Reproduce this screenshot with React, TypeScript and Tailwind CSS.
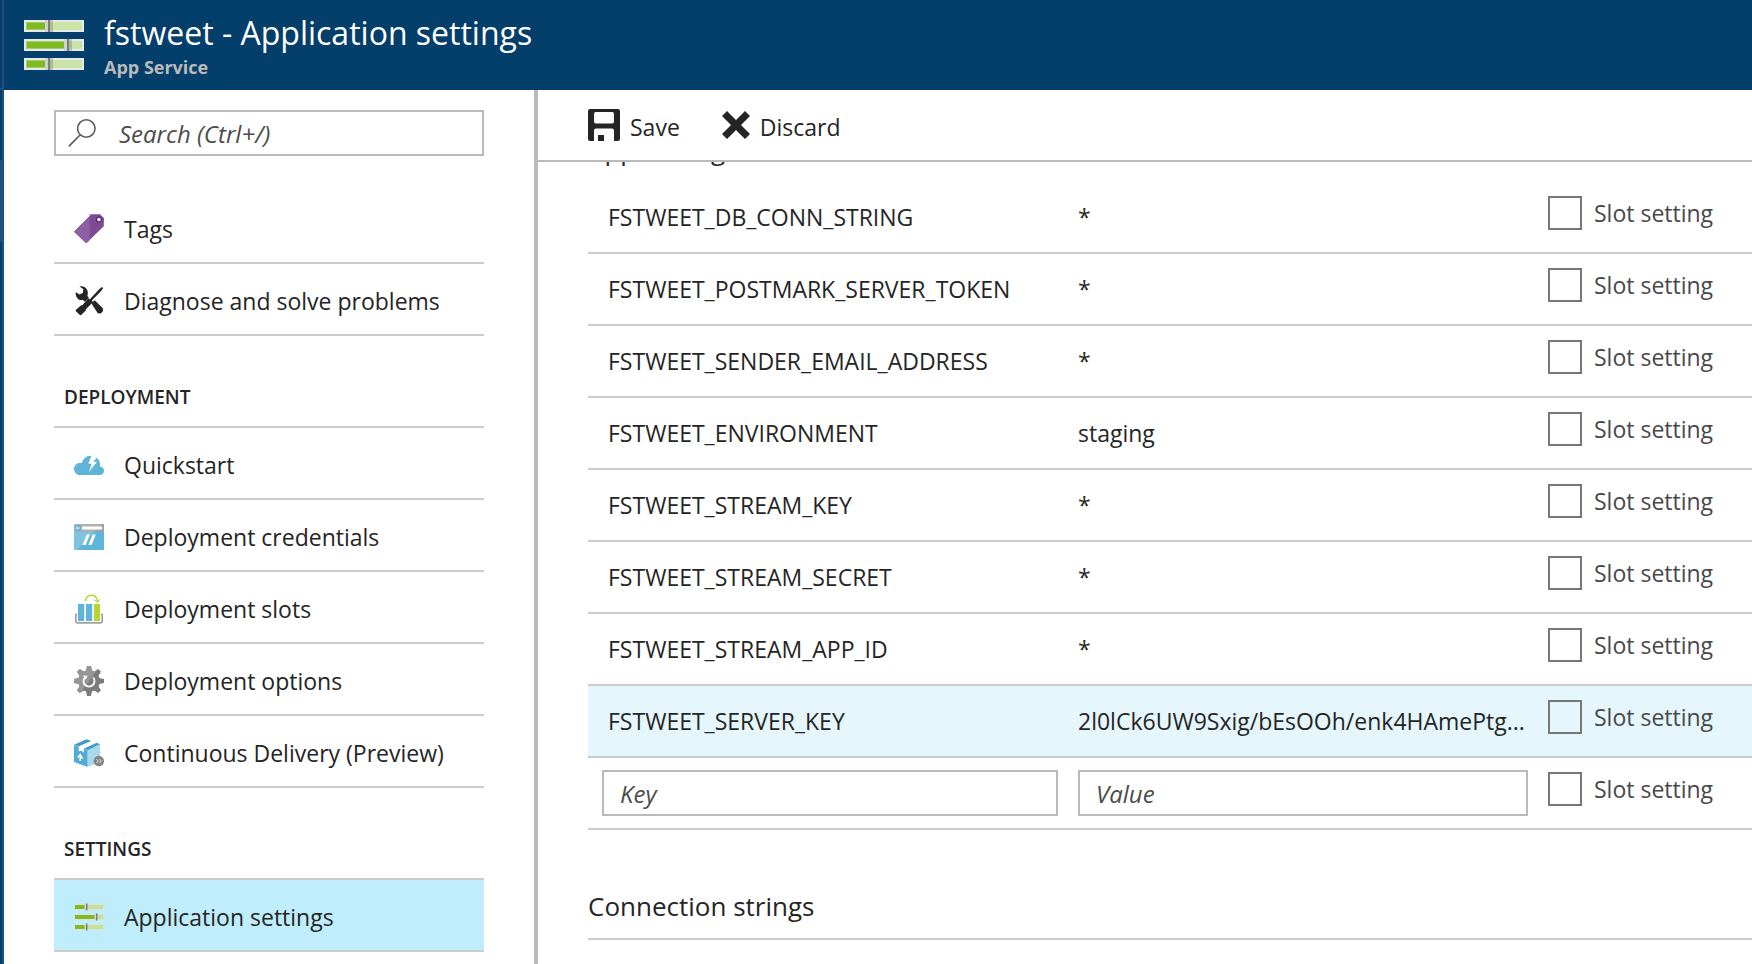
import React, { useId } from "react";

type IconProps = { className?: string };

function SlidersIcon({ className }: IconProps) {
  const bars = [
    { y: 1, knob: 22 },
    { y: 20, knob: 41 },
    { y: 39, knob: 22 },
  ];
  return (
    <svg viewBox="0 0 60 52" className={className} aria-hidden="true">
      {bars.map(({ y, knob }) => (
        <g key={y}>
          <rect x="0" y={y} width="60" height="12" fill="#e6e8ea" />
          <rect x="2" y={y + 2} width="56" height="8" fill="#cbe3a6" />
          <rect x="2" y={y + 2} width={knob - 2} height="8" fill="#a5cf63" />
          <rect x="3" y={y + 3} width={knob - 3} height="6" fill="#7fba22" />
          <rect x={knob - 1} y={y} width="3" height="12" fill="#cfd2d2" />
          <rect x={knob + 2} y={y} width="2" height="12" fill="#7a7a7a" />
          <rect x={knob + 4} y={y} width="3" height="12" fill="#000000" opacity="0.16" />
        </g>
      ))}
    </svg>
  );
}

function SmallSlidersIcon({ className }: IconProps) {
  const bars = [
    { y: 3, knob: 11 },
    { y: 13, knob: 21 },
    { y: 23, knob: 11 },
  ];
  return (
    <svg viewBox="0 0 30 30" className={className} aria-hidden="true">
      {bars.map(({ y, knob }) => (
        <g key={y}>
          <rect x="0.5" y={y - 1} width="29.5" height="6" fill="#d6e6d2" />
          <rect x="1" y={y} width="28" height="4" fill="#c6e09c" />
          <rect x="1" y={y} width={knob - 1} height="4" fill="#7fba22" />
          <rect x={knob - 0.5} y={y - 1.5} width="1.5" height="7" fill="#d0d4d6" />
          <rect x={knob + 1} y={y - 1.5} width="1.5" height="7" fill="#7a7f84" />
        </g>
      ))}
    </svg>
  );
}

function SearchIcon({ className }: IconProps) {
  return (
    <svg viewBox="0 0 28 28" className={className} aria-hidden="true" fill="none" stroke="#5a5a5a" strokeWidth="1.6">
      <circle cx="18.3" cy="9.5" r="8.7" />
      <path d="M12 16 0.8 27.4" />
    </svg>
  );
}

function TagIcon({ className }: IconProps) {
  return (
    <svg viewBox="0 0 30 30" className={className} aria-hidden="true">
      <path d="M17.5 0.3H26l4 4-0.3 8L12.3 29.3 0 17.8Z" fill="#7e4a96" />
      <path d="M17.5 0.3H15.5V26.2L12.3 29.3 0 17.8Z" fill="#8f5fa3" />
      <circle cx="25" cy="5.6" r="2.4" fill="#fff" stroke="#55266b" strokeWidth="1.2" />
    </svg>
  );
}

function ToolsIcon({ className }: IconProps) {
  return (
    <svg viewBox="0 0 30 30" className={className} aria-hidden="true" fill="#252525">
      <path d="M5.5 0.5C8.500-0.300 12 1 13.300 4.200c0.800 2 0.700 4 0 5.700l1.700 1.800-4.300 4.100-1.900-2c-2.400 0.600-4.800-0.300-6-2.400C1.600 9.600 1.400 7.700 1.900 6.200L5.600 8.400 9 6.800 9.200 3Z" />
      <path d="m17.3 17.2 3.4-2.900 7.400 7.300c1.300 1.400 1.300 3 0.200 4.400-1.600 1.800-3.400 2-4.700 1Z" />
      <path d="M28.6 1.3 29 2.6 26.2 6 17.8 14.4l1.200 1.700-7.300 7.300 0.300 0.800-5.100 5-1-0.300L2.1 25.400l-0.600-1.200 5.600-5 1 0.200 6-6.800 1.800 0.700L24.2 4.200 27.400 1.300Z" />
    </svg>
  );
}

function CloudIcon({ className }: IconProps) {
  return (
    <svg viewBox="0 0 30 30" className={className} aria-hidden="true">
      <path
        d="M5.8 25C2.5 25 0 22.300 0 19s2.500-6 6-6c0.700 0 1.300 0.100 1.800 0.300C9 9 12 5.800 16.500 5.800c4.600 0 8.600 3 9.500 7.600v3.100c2.500 0.200 4 2 4 4.200 0 2.500-1.700 4.300-4.200 4.300Z"
        fill="#5eb4d9"
      />
      <path d="M17.8 5 14.3 13.800h3.400L15 22l8-10.200h-3.800L23.500 7l1-2Z" fill="#fff" />
      <path d="M23.8 8.500 21.700 11.300h3.200Z" fill="#5eb4d9" />
    </svg>
  );
}

function CredentialsIcon({ className }: IconProps) {
  return (
    <svg viewBox="0 0 30 30" className={className} aria-hidden="true">
      <rect x="0" y="2" width="30" height="26" fill="#5eb4d9" />
      <rect x="0" y="2" width="30" height="7.5" fill="#a2a2a2" />
      <path d="M0 9.5H20.5L3 28H0Z" fill="#7fc3e0" />
      <path d="M0 2H28L21 9.500H0Z" fill="#b0b0b0" />
      <rect x="8" y="4.5" width="20" height="3" fill="#fff" />
      <circle cx="4.3" cy="6" r="3" fill="#4eaedb" />
      <path d="M6.4 6H2.4M4.3 4.200 2.400 6l1.900 1.800" fill="none" stroke="#fff" strokeWidth="0.9" />
      <path d="M12.7 12.500h3.200L11.700 23H8.500ZM18.600 12.500h3.200L17.600 23h-3.200Z" fill="#fff" />
    </svg>
  );
}

function SlotsIcon({ className }: IconProps) {
  return (
    <svg viewBox="0 0 30 30" className={className} aria-hidden="true">
      <path d="M3.2 20.500H1.800v6.500c0 1.200 0.700 1.900 1.900 1.900h22.600c1.200 0 1.900-0.700 1.900-1.900V20.500H26.800" fill="none" stroke="#a0a1a2" strokeWidth="1.7" />
      <rect x="4" y="10" width="6.2" height="17" fill="#5eb4d9" />
      <rect x="12" y="10" width="6.2" height="17" fill="#5eb4d9" />
      <rect x="20" y="10" width="6" height="17" fill="#b8d432" />
      <path d="M11.3 7C12 3.300 14.500 1.200 17.500 1.200c3.100 0 5 1.800 5.700 4.600" fill="none" stroke="#b8d432" strokeWidth="1.5" />
      <path d="M19 5.300 22.900 6.400l3.600-1.300-2.900 3.900Z" fill="#b8d432" />
    </svg>
  );
}

function GearIcon({ className }: IconProps) {
  const clip = useId();
  const teeth = [0, 45, 90, 135, 180, 225, 270, 315];
  const body = (
    <>
      <circle cx="15" cy="15" r="10.8" />
      {teeth.map((a) => (
        <path key={a} d="M11.8 6 13 0h4l1.200 6Z" transform={`rotate(${a} 15 15)`} />
      ))}
    </>
  );
  return (
    <svg viewBox="0 0 30 30" className={className} aria-hidden="true">
      <clipPath id={clip}>
        <path d="M0 0H26L4 30H0Z" />
      </clipPath>
      <g fill="#7c7c7c">{body}</g>
      <g fill="#969696" clipPath={`url(#${clip})`}>{body}</g>
      <path d="M11 11.300A5.500 5.500 0 1 0 19 11.300" fill="none" stroke="#fff" strokeWidth="1.8" />
      <path d="M8.9 9.500 13.600 9.800 11.700 13.800Z" fill="#fff" />
    </svg>
  );
}

function PackageIcon({ className }: IconProps) {
  return (
    <svg viewBox="0 0 30 30" className={className} aria-hidden="true">
      <path d="M0 7 13.800 12.300V29L0 24Z" fill="#50aad3" />
      <path d="M13.500 12.200 26 7V24L13.500 29Z" fill="#a9d8eb" />
      <path d="M0 6.800 12.500 1.300 17.500 2.900 4.700 8.500Z" fill="#3f9cc9" />
      <path d="M9.800 10.400 22.300 4.700 26.300 6.200 13.800 12.200Z" fill="#3f9cc9" />
      <path d="M4.700 8.500 17.500 2.900 22.300 4.700 9.800 10.400V15L7.700 12.800 4.700 13.300Z" fill="#fff" />
      <path d="M6.200 23V18M3.800 19.400 6.200 16.600 8.700 20.800" fill="none" stroke="#fff" strokeWidth="1.5" />
      <circle cx="24.8" cy="23" r="5.200" fill="#858585" />
      <path d="m22.3 21 2 2-2 2M25.300 21l2 2-2 2" fill="none" stroke="#e8e8e8" strokeWidth="1" />
    </svg>
  );
}

function SaveIcon({ className }: IconProps) {
  return (
    <svg viewBox="0 0 32 32" className={className} aria-hidden="true">
      <path
        fillRule="evenodd"
        fill="#252525"
        d="M2 0H30a2 2 0 0 1 2 2V30a2 2 0 0 1-2 2H26V21.500a2 2 0 0 0-2-2H8a2 2 0 0 0-2 2V32H2a2 2 0 0 1-2-2V2A2 2 0 0 1 2 0ZM8 3a2 2 0 0 0-2 2v7.500a2 2 0 0 0 2 2H24a2 2 0 0 0 2-2V5a2 2 0 0 0-2-2Z"
      />
      <rect x="10" y="26" width="6" height="6" fill="#252525" />
    </svg>
  );
}

function DiscardIcon({ className }: IconProps) {
  return (
    <svg viewBox="0 0 28 28" className={className} aria-hidden="true">
      <path d="M5 0 14 9 23 0 28 5 19 14 28 23 23 28 14 19 5 28 0 23 9 14 0 5Z" fill="#252525" />
    </svg>
  );
}

type NavItem = { label: string; Icon: (p: IconProps) => React.ReactElement; active?: boolean };
type NavGroup = { title?: string; items: NavItem[] };

const groups: NavGroup[] = [
  {
    items: [
      { label: "Tags", Icon: TagIcon },
      { label: "Diagnose and solve problems", Icon: ToolsIcon },
    ],
  },
  {
    title: "DEPLOYMENT",
    items: [
      { label: "Quickstart", Icon: CloudIcon },
      { label: "Deployment credentials", Icon: CredentialsIcon },
      { label: "Deployment slots", Icon: SlotsIcon },
      { label: "Deployment options", Icon: GearIcon },
      { label: "Continuous Delivery (Preview)", Icon: PackageIcon },
    ],
  },
  {
    title: "SETTINGS",
    items: [{ label: "Application settings", Icon: SmallSlidersIcon, active: true }],
  },
];

type Setting = { name: string; value: string; selected?: boolean };

const settings: Setting[] = [
  { name: "FSTWEET_DB_CONN_STRING", value: "*" },
  { name: "FSTWEET_POSTMARK_SERVER_TOKEN", value: "*" },
  { name: "FSTWEET_SENDER_EMAIL_ADDRESS", value: "*" },
  { name: "FSTWEET_ENVIRONMENT", value: "staging" },
  { name: "FSTWEET_STREAM_KEY", value: "*" },
  { name: "FSTWEET_STREAM_SECRET", value: "*" },
  { name: "FSTWEET_STREAM_APP_ID", value: "*" },
  { name: "FSTWEET_SERVER_KEY", value: "2l0lCk6UW9Sxig/bEsOOh/enk4HAmePtg...", selected: true },
];

function Sidebar() {
  return (
    <aside className="w-[534px] shrink-0 border-r-4 border-[#bababa] px-[50px] pt-5">
      <div className="flex h-[46px] items-center border-2 border-[#bababa] pl-3">
        <SearchIcon className="size-7 shrink-0" />
        <input
          type="text"
          aria-label="Search"
          placeholder="Search (Ctrl+/)"
          className="ml-[23px] h-full min-w-0 flex-1 bg-transparent text-[24px] italic outline-none placeholder:text-[#4c4c4c]"
        />
      </div>
      <nav className="pt-9">
        {groups.map((group, i) => (
          <section key={i}>
            {group.title && (
              <h2 className="flex h-[92px] items-center border-b-2 border-[#cccccc] pt-8 pl-[10px] text-[19px] font-semibold">
                {group.title}
              </h2>
            )}
            <ul>
              {group.items.map(({ label, Icon, active }) => (
                <li key={label} className="border-b-2 border-[#cccccc]">
                  <a
                    href="#"
                    aria-current={active ? "page" : undefined}
                    className={`flex h-[70px] items-center gap-5 pt-1 pl-5 ${active ? "bg-[#bfedfb]" : ""}`}
                  >
                    <Icon className="size-[30px] shrink-0" />
                    <span className="whitespace-nowrap">{label}</span>
                  </a>
                </li>
              ))}
            </ul>
          </section>
        ))}
      </nav>
    </aside>
  );
}

function SlotCheckbox() {
  return (
    <label className="flex items-center gap-3 pb-2 whitespace-nowrap text-[#494949]">
      <input type="checkbox" className="size-[34px] shrink-0 appearance-none border-2 border-[#777777] checked:bg-[#777777]" />
      Slot setting
    </label>
  );
}

function SettingsTable() {
  return (
    <table className="w-full table-fixed border-separate border-spacing-0" aria-label="App settings">
      <colgroup>
        <col />
        <col className="w-[470px]" />
        <col className="w-[204px]" />
      </colgroup>
      <tbody>
        {settings.map(({ name, value, selected }) => (
          <tr key={name} className={selected ? "bg-[#e5f6fd]" : ""}>
            <td className="h-[72px] truncate border-b-2 border-[#cccccc] p-0 pl-5">{name}</td>
            <td className="border-b-2 border-[#cccccc] p-0 whitespace-nowrap">{value}</td>
            <td className="border-b-2 border-[#cccccc] p-0">
              <SlotCheckbox />
            </td>
          </tr>
        ))}
        <tr>
          <td className="h-[72px] border-b-2 border-[#cccccc] p-0 pr-5 pl-[14px]">
            <input
              type="text"
              aria-label="Key"
              placeholder="Key"
              className="block h-[46px] w-full border-2 border-[#bababa] bg-white px-4 text-[24px] italic outline-none placeholder:text-[#4c4c4c]"
            />
          </td>
          <td className="border-b-2 border-[#cccccc] p-0 pr-5">
            <input
              type="text"
              aria-label="Value"
              placeholder="Value"
              className="block h-[46px] w-full border-2 border-[#bababa] bg-white px-4 text-[24px] italic outline-none placeholder:text-[#4c4c4c]"
            />
          </td>
          <td className="border-b-2 border-[#cccccc] p-0">
            <SlotCheckbox />
          </td>
        </tr>
      </tbody>
    </table>
  );
}

export default function App() {
  return (
    <div className="flex min-h-screen bg-white font-['Open_Sans',sans-serif] text-[23px] leading-8 text-[#252525]">
      <div className="flex w-1 shrink-0 flex-col border-r-2 border-[#1f517c] bg-[#043e6a]">
        <div className="h-[90px] border-b-2 border-[#1f517c]" />
        <div className="h-[70px]" />
        <div className="h-[82px] bg-[#1f517c]" />
      </div>
      <div className="flex min-w-0 flex-1 flex-col">
        <header className="flex h-[90px] items-center gap-5 bg-[#043e6a] pl-5">
          <SlidersIcon className="h-[52px] w-[60px] shrink-0" />
          <div className="pt-1">
            <h1 className="text-[32px] leading-10 text-white">fstweet - Application settings</h1>
            <p className="text-[18px] leading-7 font-bold text-[#bababa]">App Service</p>
          </div>
        </header>
        <div className="flex flex-1">
          <Sidebar />
          <main className="min-w-0 flex-1">
            <div className="flex h-[72px] items-center gap-[42px] border-b-2 border-[#bababa] pl-[50px]">
              <button type="button" className="flex items-center gap-[10px]">
                <SaveIcon className="size-8" />
                <span className="pt-1">Save</span>
              </button>
              <button type="button" className="flex items-center gap-[10px]">
                <DiscardIcon className="size-7" />
                <span className="pt-1">Discard</span>
              </button>
            </div>
            <div className="overflow-hidden pl-[50px]">
              <h2 className="-mt-[30px] mb-[14px] text-[26px] leading-9">App settings</h2>
              <SettingsTable />
              <h2 className="flex h-[110px] items-center border-b-2 border-[#cccccc] pt-11 text-[26px] leading-9">
                Connection strings
              </h2>
            </div>
          </main>
        </div>
      </div>
    </div>
  );
}
